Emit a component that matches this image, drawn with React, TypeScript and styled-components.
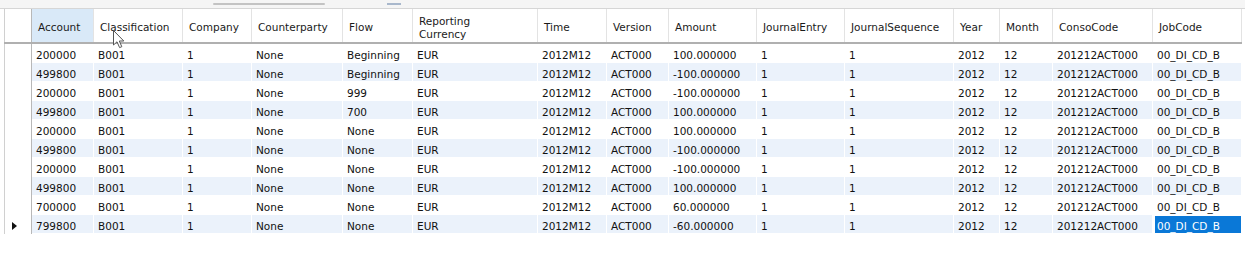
import React from 'react';
import styled, { createGlobalStyle, css } from 'styled-components';

const GlobalStyle = createGlobalStyle`
  html, body {
    margin: 0;
    padding: 0;
    background: #ffffff;
  }
  * {
    box-sizing: border-box;
  }
`;

const columns = [
  { key: 'account', title: 'Account', width: 62 },
  { key: 'classification', title: 'Classification', width: 89 },
  { key: 'company', title: 'Company', width: 69 },
  { key: 'counterparty', title: 'Counterparty', width: 91 },
  { key: 'flow', title: 'Flow', width: 70 },
  { key: 'currency', title: 'Reporting\nCurrency', width: 125 },
  { key: 'time', title: 'Time', width: 69 },
  { key: 'version', title: 'Version', width: 62 },
  { key: 'amount', title: 'Amount', width: 88 },
  { key: 'journalEntry', title: 'JournalEntry', width: 88 },
  { key: 'journalSequence', title: 'JournalSequence', width: 109 },
  { key: 'year', title: 'Year', width: 46 },
  { key: 'month', title: 'Month', width: 53 },
  { key: 'consoCode', title: 'ConsoCode', width: 100 },
  { key: 'jobCode', title: 'JobCode', width: 89 },
];

const template = '28px ' + columns.map(c => c.width + 'px').join(' ');

const rows = [
  ['200000', 'Beginning', '100.000000'],
  ['499800', 'Beginning', '-100.000000'],
  ['200000', '999', '-100.000000'],
  ['499800', '700', '100.000000'],
  ['200000', 'None', '100.000000'],
  ['499800', 'None', '-100.000000'],
  ['200000', 'None', '-100.000000'],
  ['499800', 'None', '100.000000'],
  ['700000', 'None', '60.000000'],
  ['799800', 'None', '-60.000000'],
].map(([account, flow, amount]) => [
  account, 'B001', '1', 'None', flow, 'EUR', '2012M12', 'ACT000', amount,
  '1', '1', '2012', '12', '201212ACT000', '00_DI_CD_B',
]);

const Page = styled.div`
  position: relative;
  width: 1258px;
  height: 256px;
  font-family: 'DejaVu Sans', 'Liberation Sans', sans-serif;
  font-size: 10.5px;
  color: #111;
`;

const TopStrip = styled.div`
  height: 9px;
  width: 1245px;
  background: #f5f5f5;
  border-bottom: 1px solid #d6d6d6;
  display: flex;
  align-items: center;
  padding-left: 213px;
  gap: 62px;
`;

const ScrollThumb = styled.div`
  width: 112px;
  height: 2px;
  background: #c3c3c3;
  border-radius: 1px;
`;

const ScrollMark = styled.div`
  width: 14px;
  height: 2px;
  background: #a9b8cc;
`;

const Grid = styled.div`
  margin-left: 4px;
  width: 1238px;
`;

const Row = styled.div`
  display: grid;
  grid-template-columns: ${template};
`;

const HeaderRow = styled(Row)`
  height: 35px;
  border-bottom: 2px solid #b0b0b0;
`;

const HeaderCell = styled.div<{ $hot?: boolean }>`
  display: flex;
  align-items: center;
  padding: 4px 0 0 6px;
  white-space: pre-line;
  line-height: 13px;
  color: #1a1a1a;
  background: ${p => (p.$hot ? '#d9e9f8' : '#ffffff')};
  border-right: 1px solid #e3e3e3;
`;

const Corner = styled.div`
  border-left: 1px solid #d0d0d0;
  border-right: 1px solid #b8b8b8;
  background: #ffffff;
`;

const RowHeader = styled.div`
  height: 19px;
  border-left: 1px solid #d0d0d0;
  border-right: 1px solid #b8b8b8;
  background: #ffffff;
  display: flex;
  align-items: center;
  padding: 3px 0 0 7px;
`;

const Pointer = styled.div`
  width: 0;
  height: 0;
  border-top: 4px solid transparent;
  border-bottom: 4px solid transparent;
  border-left: 5px solid #111;
`;

const Cell = styled.div<{ $alt: boolean; $selected?: boolean }>`
  height: 19px;
  line-height: 19px;
  padding: 2px 0 0 4px;
  white-space: nowrap;
  overflow: hidden;
  border-right: 1px solid #ffffff;
  border-bottom: 1px solid #ffffff;
  background: ${p => (p.$alt ? '#ebf2fb' : '#ffffff')};
  ${p =>
    p.$selected &&
    css`
      background: #0a78d7;
      color: #ffffff;
      border-left: 2px solid #ffffff;
      border-top: 1px solid #ffffff;
      padding: 1px 0 0 2px;
    `}
`;

const Cursor = styled.svg`
  position: absolute;
  left: 113px;
  top: 30px;
`;

export default function App() {
  return (
    <Page>
      <GlobalStyle />
      <TopStrip>
        <ScrollThumb />
        <ScrollMark />
      </TopStrip>
      <Grid>
        <HeaderRow>
          <Corner />
          {columns.map((c, i) => (
            <HeaderCell key={c.key} $hot={i === 0}>
              {c.title}
            </HeaderCell>
          ))}
        </HeaderRow>
        {rows.map((r, ri) => {
          const last = ri === rows.length - 1;
          return (
            <Row key={ri}>
              <RowHeader>{last ? <Pointer /> : null}</RowHeader>
              {r.map((v, ci) => (
                <Cell
                  key={ci}
                  $alt={ri % 2 === 1}
                  $selected={last && ci === r.length - 1}
                >
                  {v}
                </Cell>
              ))}
            </Row>
          );
        })}
      </Grid>
      <Cursor width="13" height="19" viewBox="0 0 13 19">
        <path
          d="M0.5 0.5 L0.5 15 L4 11.8 L6.6 17.6 L8.8 16.7 L6.3 11 L10.8 11 Z"
          fill="#ffffff"
          stroke="#555"
          strokeWidth="1"
        />
      </Cursor>
    </Page>
  );
}
